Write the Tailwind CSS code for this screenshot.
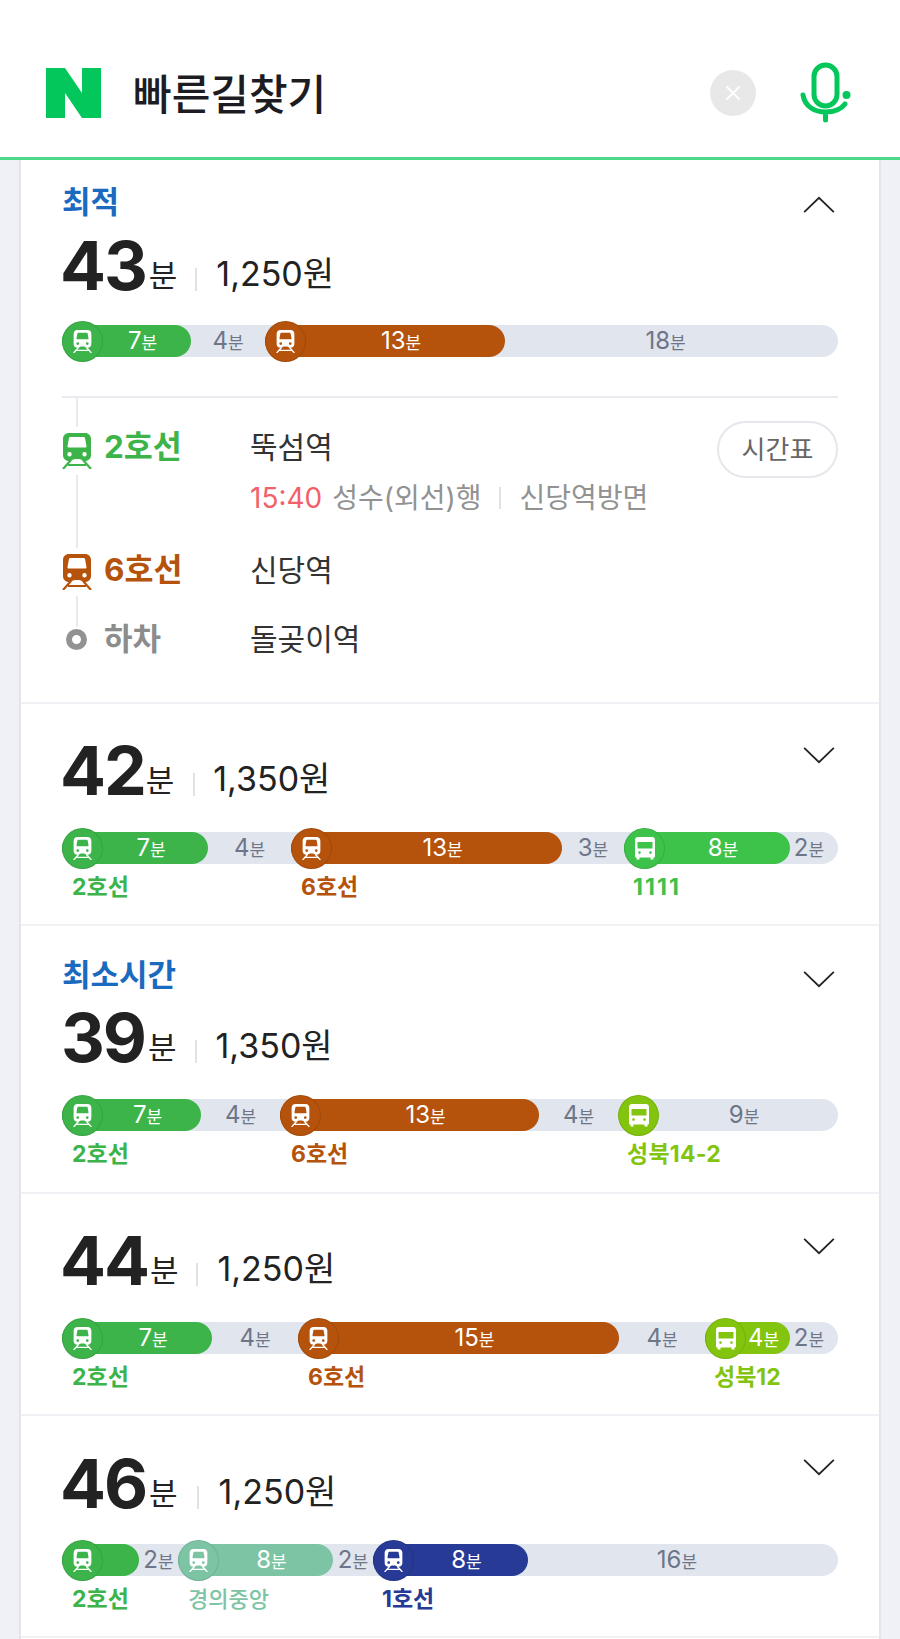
<!DOCTYPE html>
<html lang="ko">
<head>
<meta charset="utf-8">
<script src="https://cdn.jsdelivr.net/npm/@tailwindcss/browser@4"></script>
</head>
<body class="h-[1639px] overflow-hidden bg-[#eff1f6] font-[Inter,'Noto_Sans_CJK_KR',sans-serif]">
<svg class="hidden">
  <symbol id="train" viewBox="0 0 30 36">
    <path fill="currentColor" fill-rule="evenodd" d="M7 0H23C26.500 0 29 2.500 29 6V22C29 25.500 26.500 28 23 28H21C20 26.500 18 26 15 26S10 26.500 9 28H7C3.500 28 1 25.500 1 22V6C1 2.500 3.500 0 7 0ZM8.500 4C7.500 4 7 4.500 6.900 5.500L5.500 13C5.400 14 6 14.500 7 14.500H23C24 14.500 24.600 14 24.500 13L23.100 5.500C23 4.500 22.500 4 21.500 4ZM7.500 19A2.200 2.200 0 1 0 7.500 23.400 2.200 2.200 0 1 0 7.500 19ZM22.500 19A2.200 2.200 0 1 0 22.500 23.400 2.200 2.200 0 1 0 22.500 19Z"/>
    <path fill="none" stroke="currentColor" stroke-width="2.200" d="M9 27L1 36M21 27L29 36M6 32H24"/>
  </symbol>
  <symbol id="bus" viewBox="0 0 20 23">
    <path fill="currentColor" fill-rule="evenodd" d="M3 0H17C18.800 0 20 1.200 20 3V19C20 20 19.500 20.500 18.500 20.500V22.500H15.500V20.500H4.500V22.500H1.500V20.500C.5 20.500 0 20 0 19V3C0 1.200 1.200 0 3 0ZM2.500 5V11.500H17.500V5ZM4.500 14.300A1.300 1.300 0 1 0 4.500 16.900 1.300 1.300 0 1 0 4.500 14.300ZM15.500 14.300A1.300 1.300 0 1 0 15.500 16.900 1.300 1.300 0 1 0 15.500 14.300Z"/>
  </symbol>
  <symbol id="down" viewBox="0 0 36 20">
    <path fill="none" stroke="currentColor" stroke-width="2" d="M1.500 2L18 18L34.500 2"/>
  </symbol>
</svg>

<header class="flex h-[160px] items-start border-b-[3px] border-[#4cd98a] bg-white">
  <svg class="ml-[46px] mt-[68px] h-[50px] w-[55px]" viewBox="0 0 55 50"><path fill="#03c75a" d="M0 0H19L36 25V0H55V50H36L19 25V50H0Z"/></svg>
  <h1 class="ml-[32px] mt-[66px] text-[42px] leading-[58px] font-medium text-[#1c1c22]">빠른길찾기</h1>
  <div class="ml-auto mt-[70px] flex h-[46px] w-[46px] items-center justify-center rounded-full bg-[#e8e8e8]">
    <svg class="h-[16px] w-[16px]" viewBox="0 0 16 16"><path fill="none" stroke="#fff" stroke-width="1.800" d="M1.500 1.500L14.500 14.500M14.500 1.500L1.500 14.500"/></svg>
  </div>
  <svg class="ml-[44px] mr-[48px] mt-[62px] h-[62px] w-[52px]" viewBox="0 0 52 62">
    <rect x="14" y="3" width="23" height="41" rx="11.500" fill="none" stroke="#03c75a" stroke-width="5"/>
    <path fill="none" stroke="#03c75a" stroke-width="5" stroke-linecap="round" d="M3 33C5 45 15 50 25.500 50S42 46 45 42M25.500 50V58"/>
    <circle cx="46.500" cy="33" r="4" fill="#03c75a"/>
  </svg>
</header>

<main class="mx-[19px] border-x-2 border-[#e3e5ea] bg-white">

  <!-- 최적 -->
  <section class="border-b-2 border-[#f0f1f4] px-[41px] pt-[21px]">
    <div class="flex h-[42px] items-start justify-between">
      <span class="text-[31px] leading-[42px] font-bold text-[#1a6abf]">최적</span>
      <svg class="mr-[1px] mt-[15px] h-[18px] w-[36px] rotate-180 text-[#222]"><use href="#down"/></svg>
    </div>
    <div class="h-[102px] pt-[12px] text-[#222]">
      <div class="flex h-[60px] items-baseline">
        <span class="-ml-[2px] text-[68px] leading-[60px] font-bold tracking-[-0.03em]">43</span>
        <span class="ml-[3px] -translate-y-[3px] text-[31px] leading-[30px]">분</span>
        <span class="ml-[18px] mr-[19px] h-[23px] w-[2px] -translate-y-[4px] self-end bg-[#e2e2e2]"></span>
        <span class="-translate-y-[4px] text-[34px] leading-[30px]">1,250원</span>
      </div>
    </div>
    <div class="flex h-[32px] rounded-full bg-[#e0e5ee] text-[24px] leading-[32px] text-[#6e7587]">
      <div class="relative w-[129px] rounded-full bg-[#3cb44a] pl-8 text-center text-white"><span class="absolute -top-[4.500px] left-0 flex h-[41px] w-[41px] items-center justify-center rounded-full border border-black/10 bg-[#3cb44a]"><svg class="h-[23px] w-[19px]"><use href="#train"/></svg></span>7<small class="text-[17px]">분</small></div>
      <div class="w-[74px] text-center">4<small class="text-[17px]">분</small></div>
      <div class="relative w-[240px] rounded-full bg-[#b5520c] pl-8 text-center text-white"><span class="absolute -top-[4.500px] left-0 flex h-[41px] w-[41px] items-center justify-center rounded-full border border-black/10 bg-[#b5520c]"><svg class="h-[23px] w-[19px]"><use href="#train"/></svg></span>13<small class="text-[17px]">분</small></div>
      <div class="flex-1 pr-3 text-center">18<small class="text-[17px]">분</small></div>
    </div>
    <div class="relative mt-[39px] border-t-2 border-[#e9ebf0] pb-[45px] pt-[23px]">
      <span class="absolute bottom-[75px] left-[14px] top-0 w-[2px] bg-[#e8eaef]"></span>
      <div class="relative flex h-[131px] items-start">
        <div class="flex w-[188px] items-start">
          <span class="mt-[6px] bg-white py-[6px]"><svg class="block h-[36px] w-[30px] text-[#3cb44a]"><use href="#train"/></svg></span>
          <span class="ml-[12px] mt-[6px] text-[31.500px] leading-[40px] font-bold text-[#3cb44a]">2호선</span>
        </div>
        <div class="flex-1 pt-[8px]">
          <p class="text-[30px] leading-[36px] text-[#333]">뚝섬역</p>
          <p class="mt-[15px] flex items-center text-[28px] leading-[36px] text-[#929292]"><span class="mr-[10px] text-[#f2606a]">15:40</span>성수(외선)행<span class="mx-[18px] h-[22px] w-[2px] bg-[#e2e2e2]"></span>신당역방면</p>
        </div>
        <button class="absolute right-0 top-0 h-[57px] w-[121px] rounded-full border-2 border-[#e6e7ec] text-[26px] text-[#666]">시간표</button>
      </div>
      <div class="relative flex h-[69px] items-start">
        <div class="flex w-[188px] items-start">
          <span class="-mt-[4px] bg-white py-[6px]"><svg class="block h-[36px] w-[30px] text-[#b5520c]"><use href="#train"/></svg></span>
          <span class="ml-[12px] -mt-[2px] text-[31.500px] leading-[40px] font-bold text-[#b5520c]">6호선</span>
        </div>
        <p class="text-[30px] leading-[36px] text-[#333]">신당역</p>
      </div>
      <div class="relative flex h-[36px] items-center">
        <div class="flex w-[188px] items-center">
          <span class="ml-[4px] h-[21px] w-[21px] rounded-full border-[6px] border-[#929292] bg-white"></span>
          <span class="ml-[17px] text-[31px] leading-[36px] font-bold text-[#8c8c8c]">하차</span>
        </div>
        <p class="text-[30px] leading-[36px] text-[#333]">돌곶이역</p>
      </div>
    </div>
  </section>

  <!-- 42 -->
  <section class="h-[222px] border-b-2 border-[#f0f1f4] px-[41px] pt-[36px]">
    <div class="flex h-[92px] items-start justify-between">
      <div class="flex h-[60px] items-baseline text-[#222]">
        <span class="-ml-[2px] text-[68px] leading-[60px] font-bold tracking-[-0.03em]">42</span>
        <span class="ml-[1px] -translate-y-[3px] text-[31px] leading-[30px]">분</span>
        <span class="ml-[19px] mr-[18px] h-[23px] w-[2px] -translate-y-[4px] self-end bg-[#e2e2e2]"></span>
        <span class="-translate-y-[4px] text-[34px] leading-[30px]">1,350원</span>
      </div>
      <svg class="mr-[1px] mt-[6px] h-[18px] w-[36px] text-[#222]"><use href="#down"/></svg>
    </div>
    <div class="flex h-[32px] rounded-full bg-[#e0e5ee] text-[24px] leading-[32px] text-[#6e7587]">
      <div class="relative w-[146px] rounded-full bg-[#3cb44a] pl-8 text-center text-white"><span class="absolute -top-[4.500px] left-0 flex h-[41px] w-[41px] items-center justify-center rounded-full border border-black/10 bg-[#3cb44a]"><svg class="h-[23px] w-[19px]"><use href="#train"/></svg></span>7<small class="text-[17px]">분</small></div>
      <div class="w-[83px] text-center">4<small class="text-[17px]">분</small></div>
      <div class="relative w-[271px] rounded-full bg-[#b5520c] pl-8 text-center text-white"><span class="absolute -top-[4.500px] left-0 flex h-[41px] w-[41px] items-center justify-center rounded-full border border-black/10 bg-[#b5520c]"><svg class="h-[23px] w-[19px]"><use href="#train"/></svg></span>13<small class="text-[17px]">분</small></div>
      <div class="w-[62px] text-center">3<small class="text-[17px]">분</small></div>
      <div class="relative w-[166px] rounded-full bg-[#3dc24a] pl-8 text-center text-white"><span class="absolute -top-[4.500px] left-0 flex h-[41px] w-[41px] items-center justify-center rounded-full border border-black/10 bg-[#3dc24a]"><svg class="h-[23px] w-[20px]"><use href="#bus"/></svg></span>8<small class="text-[17px]">분</small></div>
      <div class="flex-1 pr-[10px] text-center">2<small class="text-[17px]">분</small></div>
    </div>
    <div class="mt-[7px] flex text-[23px] leading-[32px] font-bold">
      <span class="ml-[10px] w-[219px] text-[#3cb44a]">2호선</span>
      <span class="ml-[10px] w-[332px] text-[#b5520c]">6호선</span>
      <span class="tracking-[0.09em] text-[#3dc24a]">1111</span>
    </div>
  </section>

  <!-- 39 -->
  <section class="h-[268px] border-b-2 border-[#f0f1f4] px-[41px] pt-[28px]">
    <div class="flex h-[43px] items-start justify-between">
      <span class="text-[31px] leading-[42px] font-bold text-[#1a6abf]">최소시간</span>
      <svg class="mr-[1px] mt-[16px] h-[18px] w-[36px] text-[#222]"><use href="#down"/></svg>
    </div>
    <div class="h-[102px] pt-[10px] text-[#222]">
      <div class="flex h-[60px] items-baseline">
        <span class="-ml-[1px] text-[68px] leading-[60px] font-bold tracking-[-0.03em]">39</span>
        <span class="ml-[3px] -translate-y-[3px] text-[31px] leading-[30px]">분</span>
        <span class="ml-[18px] mr-[19px] h-[23px] w-[2px] -translate-y-[4px] self-end bg-[#e2e2e2]"></span>
        <span class="-translate-y-[4px] text-[34px] leading-[30px]">1,350원</span>
      </div>
    </div>
    <div class="flex h-[32px] rounded-full bg-[#e0e5ee] text-[24px] leading-[32px] text-[#6e7587]">
      <div class="relative w-[139px] rounded-full bg-[#3cb44a] pl-8 text-center text-white"><span class="absolute -top-[4.500px] left-0 flex h-[41px] w-[41px] items-center justify-center rounded-full border border-black/10 bg-[#3cb44a]"><svg class="h-[23px] w-[19px]"><use href="#train"/></svg></span>7<small class="text-[17px]">분</small></div>
      <div class="w-[79px] text-center">4<small class="text-[17px]">분</small></div>
      <div class="relative w-[259px] rounded-full bg-[#b5520c] pl-8 text-center text-white"><span class="absolute -top-[4.500px] left-0 flex h-[41px] w-[41px] items-center justify-center rounded-full border border-black/10 bg-[#b5520c]"><svg class="h-[23px] w-[19px]"><use href="#train"/></svg></span>13<small class="text-[17px]">분</small></div>
      <div class="w-[79px] text-center">4<small class="text-[17px]">분</small></div>
      <div class="relative flex-1 pl-8 text-center"><span class="absolute -top-[4.500px] left-0 flex h-[41px] w-[41px] items-center justify-center rounded-full border border-black/10 bg-[#83c40e] text-white"><svg class="h-[23px] w-[20px]"><use href="#bus"/></svg></span>9<small class="text-[17px]">분</small></div>
    </div>
    <div class="mt-[7px] flex text-[23px] leading-[32px] font-bold">
      <span class="ml-[10px] w-[219px] text-[#3cb44a]">2호선</span>
      <span class="w-[336px] text-[#b5520c]">6호선</span>
      <span class="tracking-[0.01em] text-[#83c40e]">성북14-2</span>
    </div>
  </section>

  <!-- 44 -->
  <section class="h-[222px] border-b-2 border-[#f0f1f4] px-[41px] pt-[34px]">
    <div class="flex h-[94px] items-start justify-between">
      <div class="mt-[2px] flex h-[60px] items-baseline text-[#222]">
        <span class="-ml-[2px] text-[68px] leading-[60px] font-bold tracking-[-0.03em]">44</span>
        <span class="ml-[2px] -translate-y-[3px] text-[31px] leading-[30px]">분</span>
        <span class="ml-[18px] mr-[19px] h-[23px] w-[2px] -translate-y-[4px] self-end bg-[#e2e2e2]"></span>
        <span class="-translate-y-[4px] text-[34px] leading-[30px]">1,250원</span>
      </div>
      <svg class="mr-[1px] mt-[9px] h-[18px] w-[36px] text-[#222]"><use href="#down"/></svg>
    </div>
    <div class="flex h-[32px] rounded-full bg-[#e0e5ee] text-[24px] leading-[32px] text-[#6e7587]">
      <div class="relative w-[150px] rounded-full bg-[#3cb44a] pl-8 text-center text-white"><span class="absolute -top-[4.500px] left-0 flex h-[41px] w-[41px] items-center justify-center rounded-full border border-black/10 bg-[#3cb44a]"><svg class="h-[23px] w-[19px]"><use href="#train"/></svg></span>7<small class="text-[17px]">분</small></div>
      <div class="w-[86px] text-center">4<small class="text-[17px]">분</small></div>
      <div class="relative w-[321px] rounded-full bg-[#b5520c] pl-8 text-center text-white"><span class="absolute -top-[4.500px] left-0 flex h-[41px] w-[41px] items-center justify-center rounded-full border border-black/10 bg-[#b5520c]"><svg class="h-[23px] w-[19px]"><use href="#train"/></svg></span>15<small class="text-[17px]">분</small></div>
      <div class="w-[86px] text-center">4<small class="text-[17px]">분</small></div>
      <div class="relative w-[85px] rounded-full bg-[#83c40e] pl-[32px] text-center text-white"><span class="absolute -top-[4.500px] left-0 flex h-[41px] w-[41px] items-center justify-center rounded-full border border-black/10 bg-[#83c40e]"><svg class="h-[23px] w-[20px]"><use href="#bus"/></svg></span>4<small class="text-[17px]">분</small></div>
      <div class="flex-1 pr-[10px] text-center">2<small class="text-[17px]">분</small></div>
    </div>
    <div class="mt-[7px] flex text-[23px] leading-[32px] font-bold">
      <span class="ml-[10px] w-[236px] text-[#3cb44a]">2호선</span>
      <span class="w-[406px] text-[#b5520c]">6호선</span>
      <span class="text-[#83c40e]">성북12</span>
    </div>
  </section>

  <!-- 46 -->
  <section class="h-[222px] border-b-2 border-[#f0f1f4] px-[41px] pt-[34px]">
    <div class="flex h-[94px] items-start justify-between">
      <div class="mt-[3px] flex h-[60px] items-baseline text-[#222]">
        <span class="-ml-[2px] text-[68px] leading-[60px] font-bold tracking-[-0.03em]">46</span>
        <span class="ml-[3px] -translate-y-[3px] text-[31px] leading-[30px]">분</span>
        <span class="ml-[19px] mr-[20px] h-[23px] w-[2px] -translate-y-[4px] self-end bg-[#e2e2e2]"></span>
        <span class="-translate-y-[4px] text-[34px] leading-[30px]">1,250원</span>
      </div>
      <svg class="mr-[1px] mt-[8px] h-[18px] w-[36px] text-[#222]"><use href="#down"/></svg>
    </div>
    <div class="flex h-[32px] rounded-full bg-[#e0e5ee] text-[24px] leading-[32px] text-[#6e7587]">
      <div class="relative w-[77px] rounded-full bg-[#3cb44a]"><span class="absolute -top-[4.500px] left-0 flex h-[41px] w-[41px] items-center justify-center rounded-full border border-black/10 bg-[#3cb44a] text-white"><svg class="h-[23px] w-[19px]"><use href="#train"/></svg></span></div>
      <div class="w-[39px] text-center">2<small class="text-[17px]">분</small></div>
      <div class="relative w-[155px] rounded-full bg-[#7dc4a4] pl-8 text-center text-white"><span class="absolute -top-[4.500px] left-0 flex h-[41px] w-[41px] items-center justify-center rounded-full border border-black/10 bg-[#7dc4a4]"><svg class="h-[23px] w-[19px]"><use href="#train"/></svg></span>8<small class="text-[17px]">분</small></div>
      <div class="w-[40px] text-center">2<small class="text-[17px]">분</small></div>
      <div class="relative w-[155px] rounded-full bg-[#263a96] pl-8 text-center text-white"><span class="absolute -top-[4.500px] left-0 flex h-[41px] w-[41px] items-center justify-center rounded-full border border-black/10 bg-[#263a96]"><svg class="h-[23px] w-[19px]"><use href="#train"/></svg></span>8<small class="text-[17px]">분</small></div>
      <div class="flex-1 pr-3 text-center">16<small class="text-[17px]">분</small></div>
    </div>
    <div class="mt-[7px] flex text-[23px] leading-[32px] font-bold">
      <span class="ml-[10px] w-[116px] text-[#3cb44a]">2호선</span>
      <span class="w-[194px] text-[22px] font-medium text-[#7dc4a4]">경의중앙</span>
      <span class="text-[#263a96]">1호선</span>
    </div>
  </section>
  <div class="h-[10px]"></div>
</main>
</body>
</html>
